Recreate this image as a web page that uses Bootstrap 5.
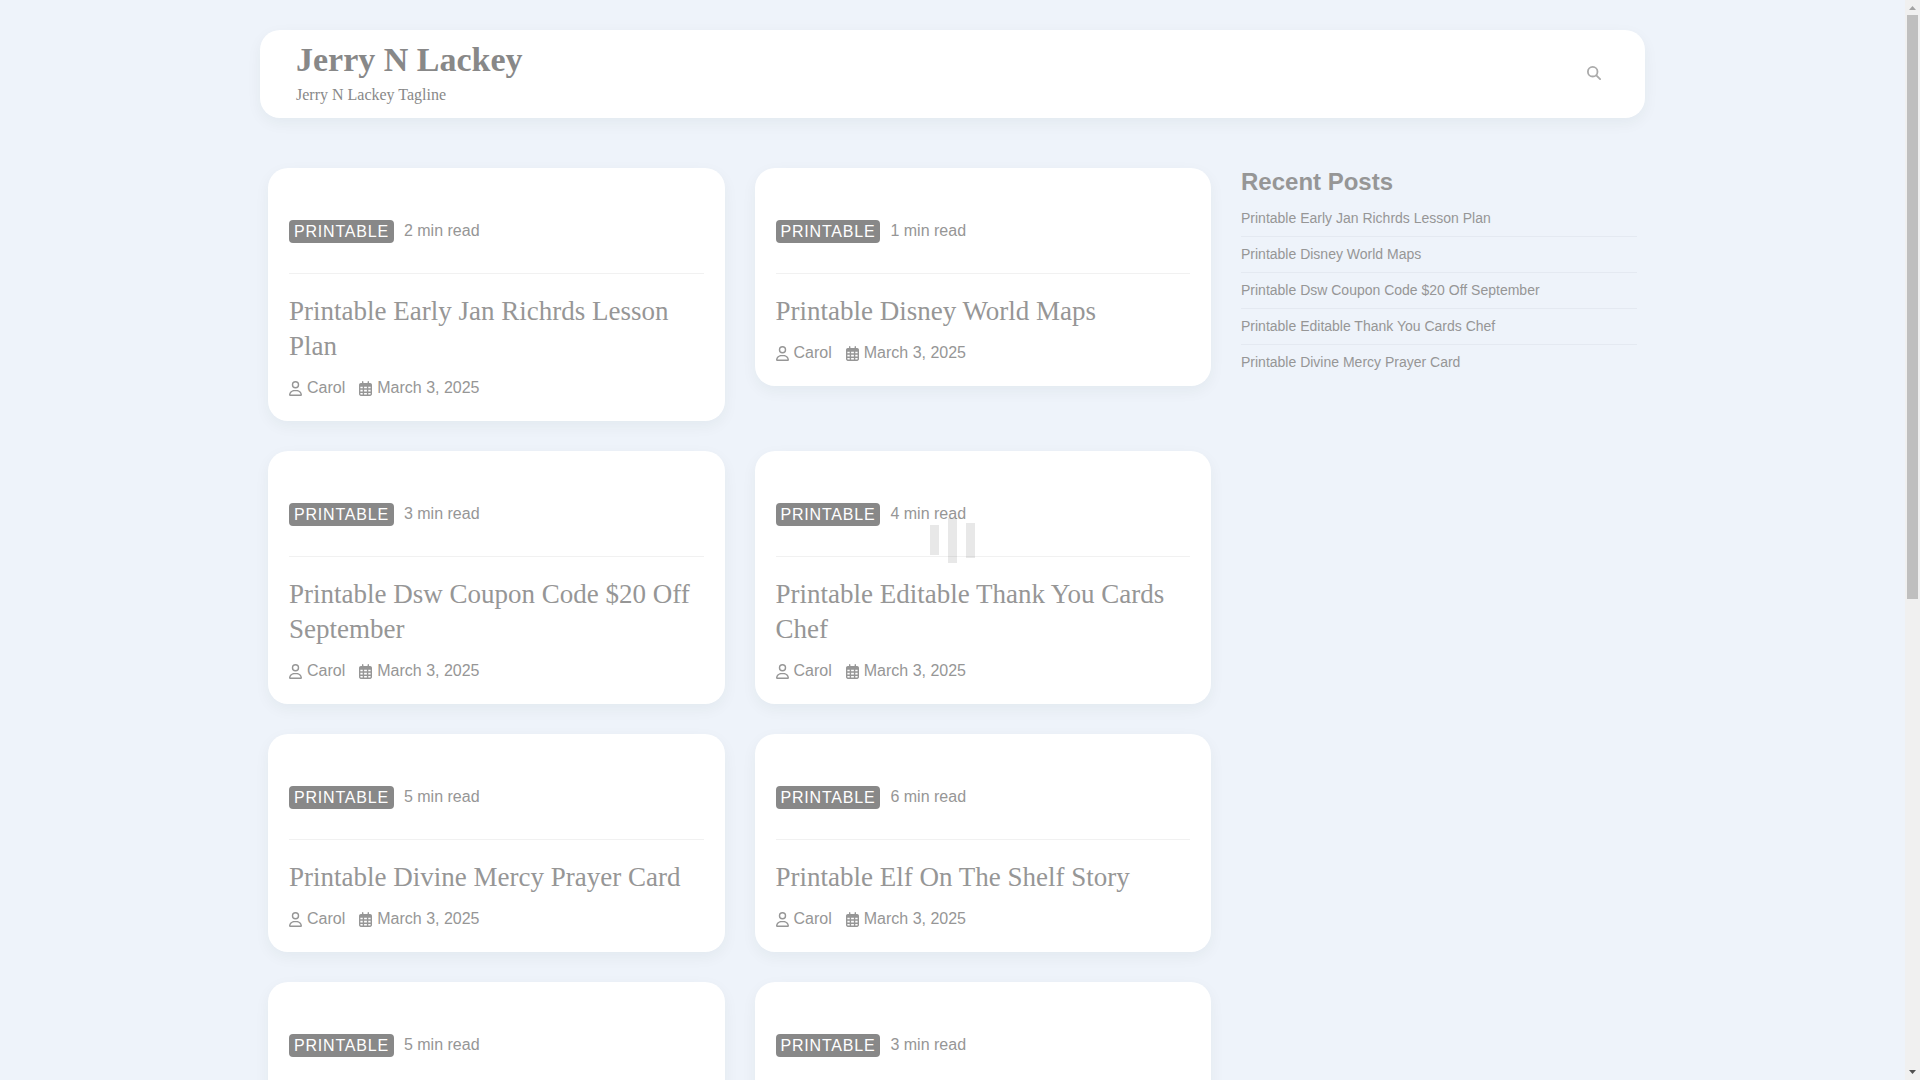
<!DOCTYPE html>
<html lang="en">
<head>
<meta charset="utf-8">
<meta name="viewport" content="width=device-width, initial-scale=1">
<title>Jerry N Lackey</title>
<link href="https://cdn.jsdelivr.net/npm/bootstrap@5.3.0/dist/css/bootstrap.min.css" rel="stylesheet">
<style>
  :root { --ink: #969696; --ink-strong: #888; --page: #eef3fa; }
  body { background: var(--page); color: var(--ink); font-family: "Liberation Sans", Arial, sans-serif; font-size: 16px; line-height: 24px; }
  a { color: inherit; text-decoration: none; }
  a:hover { color: #555; }
  .viewport { height: 100vh; }
  .site { max-width: 1385px; }
  .panel { background: #fff; border-radius: 20px; box-shadow: 0 5px 15px rgba(20, 50, 30, .05); }
  .masthead { margin-top: 30px; padding: 8px 36px 10px; }
  .site-title { font: bold 34px/44px "Liberation Serif", "Times New Roman", serif; color: var(--ink-strong); margin: 0; }
  .tagline { font: 16px/26px "Liberation Serif", "Times New Roman", serif; color: var(--ink-strong); margin: 0; }
  .search-btn { padding: 8px; border: 0; color: #aaa; line-height: 14px; }
  .layout { margin-top: 50px; padding: 0 8px; gap: 30px; }
  .posts { display: grid; grid-template-columns: repeat(2, minmax(0, 1fr)); gap: 30px; align-items: start; }
  .sidebar { flex: 0 0 396px; }
  .post { padding: 21px; }
  .post-top { padding: 30px 0; border-bottom: 1px solid #f1f1f1; margin-bottom: 20px; gap: 10px; }
  .tag { background: var(--ink-strong); color: #fff; border-radius: 4px; padding: 0 5px; line-height: 23px; letter-spacing: .05em; text-transform: uppercase; }
  .tag:hover { color: #fff; }
  .post-title { font: 27px/35px "Liberation Serif", "Times New Roman", serif; margin: 0 0 12px; }
  .post-meta { gap: 14px; }
  .post-meta a { gap: 5px; }
  .post-next { min-height: 218px; }
  .widget-title { font-size: 24px; line-height: 28px; font-weight: bold; margin: 0 0 8px; }
  .recent { font-size: 14px; line-height: 21px; }
  .recent li { padding: 7px 0; border-bottom: 1px solid #e4e9f1; }
  .recent li:first-child { padding-top: 4px; }
  .recent li:last-child { border-bottom: 0; }
  .loader { position: fixed; inset: 0 15px 0 0; pointer-events: none; gap: 9px; }
  .loader span { width: 9px; height: 30px; background: rgba(0, 0, 0, .09); }
  .loader span:nth-child(2) { height: 45px; }
  .loader span:nth-child(3) { height: 35px; }
  .rail { flex: 0 0 15px; background: #f0f0f0; }
  .rail .thumb { width: 11px; height: 54.1%; background: #bfbfbf; }
</style>
</head>
<body>
<svg class="d-none" aria-hidden="true">
  <symbol id="user" viewBox="0 0 448 512"><path d="M304 128a80 80 0 1 0-160 0 80 80 0 1 0 160 0zM96 128a128 128 0 1 1 256 0A128 128 0 1 1 96 128zM49.300 464H398.700c-8.900-63.300-63.300-112-129-112H178.300c-65.700 0-120.100 48.700-129 112zM0 482.300C0 383.800 79.800 304 178.300 304h91.400C368.200 304 448 383.800 448 482.300c0 16.400-13.300 29.700-29.700 29.700H29.700C13.300 512 0 498.700 0 482.300z"/></symbol>
  <symbol id="cal" viewBox="0 0 448 512"><path d="M152 24c0-13.300-10.700-24-24-24s-24 10.700-24 24V64H64C28.700 64 0 92.700 0 128v320c0 35.300 28.700 64 64 64H384c35.300 0 64-28.700 64-64V128c0-35.300-28.700-64-64-64H344V24c0-13.300-10.700-24-24-24s-24 10.700-24 24V64H152V24zM48 192h80v56H48V192zm0 104h80v64H48V296zm128 0h96v64H176V296zm144 0h80v64H320V296zm80-48H320V192h80v56zm0 160v40c0 8.800-7.200 16-16 16H320V408h80zm-128 0v56H176V408h96zm-144 0v56H64c-8.800 0-16-7.200-16-16V408h80zM272 248H176V192h96v56z"/></symbol>
</svg>
<div class="viewport d-flex overflow-hidden">
  <div class="flex-grow-1 overflow-hidden">
    <div class="site mx-auto">
      <header class="masthead panel d-flex align-items-center justify-content-between">
        <div>
          <h1 class="site-title"><a href="#">Jerry N Lackey</a></h1>
          <p class="tagline">Jerry N Lackey Tagline</p>
        </div>
        <button class="search-btn btn" type="button" aria-label="Search">
          <svg width="14" height="14" viewBox="0 0 14 14" fill="none" stroke="currentColor" stroke-width="1.800" stroke-linecap="round"><circle cx="5.700" cy="5.700" r="4.800"/><path d="M9.300 9.300 13.100 13.100"/></svg>
        </button>
      </header>
      <div class="layout d-flex align-items-start">
        <main class="posts flex-grow-1">
          <article class="post panel">
            <div class="post-top d-flex align-items-center"><a class="tag" href="#">Printable</a><span>2 min read</span></div>
            <h2 class="post-title"><a href="#">Printable Early Jan Richrds Lesson Plan</a></h2>
            <div class="post-meta d-flex"><a class="d-flex align-items-center" href="#"><svg width="13" height="15" fill="currentColor"><use href="#user"/></svg>Carol</a><a class="d-flex align-items-center" href="#"><svg width="13" height="15" fill="currentColor"><use href="#cal"/></svg>March 3, 2025</a></div>
          </article>
          <article class="post panel">
            <div class="post-top d-flex align-items-center"><a class="tag" href="#">Printable</a><span>1 min read</span></div>
            <h2 class="post-title"><a href="#">Printable Disney World Maps</a></h2>
            <div class="post-meta d-flex"><a class="d-flex align-items-center" href="#"><svg width="13" height="15" fill="currentColor"><use href="#user"/></svg>Carol</a><a class="d-flex align-items-center" href="#"><svg width="13" height="15" fill="currentColor"><use href="#cal"/></svg>March 3, 2025</a></div>
          </article>
          <article class="post panel">
            <div class="post-top d-flex align-items-center"><a class="tag" href="#">Printable</a><span>3 min read</span></div>
            <h2 class="post-title"><a href="#">Printable Dsw Coupon Code $20 Off September</a></h2>
            <div class="post-meta d-flex"><a class="d-flex align-items-center" href="#"><svg width="13" height="15" fill="currentColor"><use href="#user"/></svg>Carol</a><a class="d-flex align-items-center" href="#"><svg width="13" height="15" fill="currentColor"><use href="#cal"/></svg>March 3, 2025</a></div>
          </article>
          <article class="post panel">
            <div class="post-top d-flex align-items-center"><a class="tag" href="#">Printable</a><span>4 min read</span></div>
            <h2 class="post-title"><a href="#">Printable Editable Thank You Cards Chef</a></h2>
            <div class="post-meta d-flex"><a class="d-flex align-items-center" href="#"><svg width="13" height="15" fill="currentColor"><use href="#user"/></svg>Carol</a><a class="d-flex align-items-center" href="#"><svg width="13" height="15" fill="currentColor"><use href="#cal"/></svg>March 3, 2025</a></div>
          </article>
          <article class="post panel">
            <div class="post-top d-flex align-items-center"><a class="tag" href="#">Printable</a><span>5 min read</span></div>
            <h2 class="post-title"><a href="#">Printable Divine Mercy Prayer Card</a></h2>
            <div class="post-meta d-flex"><a class="d-flex align-items-center" href="#"><svg width="13" height="15" fill="currentColor"><use href="#user"/></svg>Carol</a><a class="d-flex align-items-center" href="#"><svg width="13" height="15" fill="currentColor"><use href="#cal"/></svg>March 3, 2025</a></div>
          </article>
          <article class="post panel">
            <div class="post-top d-flex align-items-center"><a class="tag" href="#">Printable</a><span>6 min read</span></div>
            <h2 class="post-title"><a href="#">Printable Elf On The Shelf Story</a></h2>
            <div class="post-meta d-flex"><a class="d-flex align-items-center" href="#"><svg width="13" height="15" fill="currentColor"><use href="#user"/></svg>Carol</a><a class="d-flex align-items-center" href="#"><svg width="13" height="15" fill="currentColor"><use href="#cal"/></svg>March 3, 2025</a></div>
          </article>
          <article class="post post-next panel">
            <div class="post-top d-flex align-items-center"><a class="tag" href="#">Printable</a><span>5 min read</span></div>
          </article>
          <article class="post post-next panel">
            <div class="post-top d-flex align-items-center"><a class="tag" href="#">Printable</a><span>3 min read</span></div>
          </article>
        </main>
        <aside class="sidebar">
          <h2 class="widget-title">Recent Posts</h2>
          <ul class="recent list-unstyled mb-0">
            <li><a href="#">Printable Early Jan Richrds Lesson Plan</a></li>
            <li><a href="#">Printable Disney World Maps</a></li>
            <li><a href="#">Printable Dsw Coupon Code $20 Off September</a></li>
            <li><a href="#">Printable Editable Thank You Cards Chef</a></li>
            <li><a href="#">Printable Divine Mercy Prayer Card</a></li>
          </ul>
        </aside>
      </div>
    </div>
  </div>
  <div class="rail d-flex flex-column align-items-center" aria-hidden="true">
    <svg width="15" height="15"><path d="M4 10h7L7.500 6z" fill="#a3a3a3"/></svg>
    <div class="thumb"></div>
    <svg class="mt-auto" width="15" height="15"><path d="M4 5h7L7.500 9z" fill="#505050"/></svg>
  </div>
</div>
<div class="loader d-flex align-items-center justify-content-center" aria-hidden="true"><span></span><span></span><span></span></div>
<script src="https://cdn.jsdelivr.net/npm/bootstrap@5.3.0/dist/js/bootstrap.bundle.min.js"></script>
</body>
</html>
